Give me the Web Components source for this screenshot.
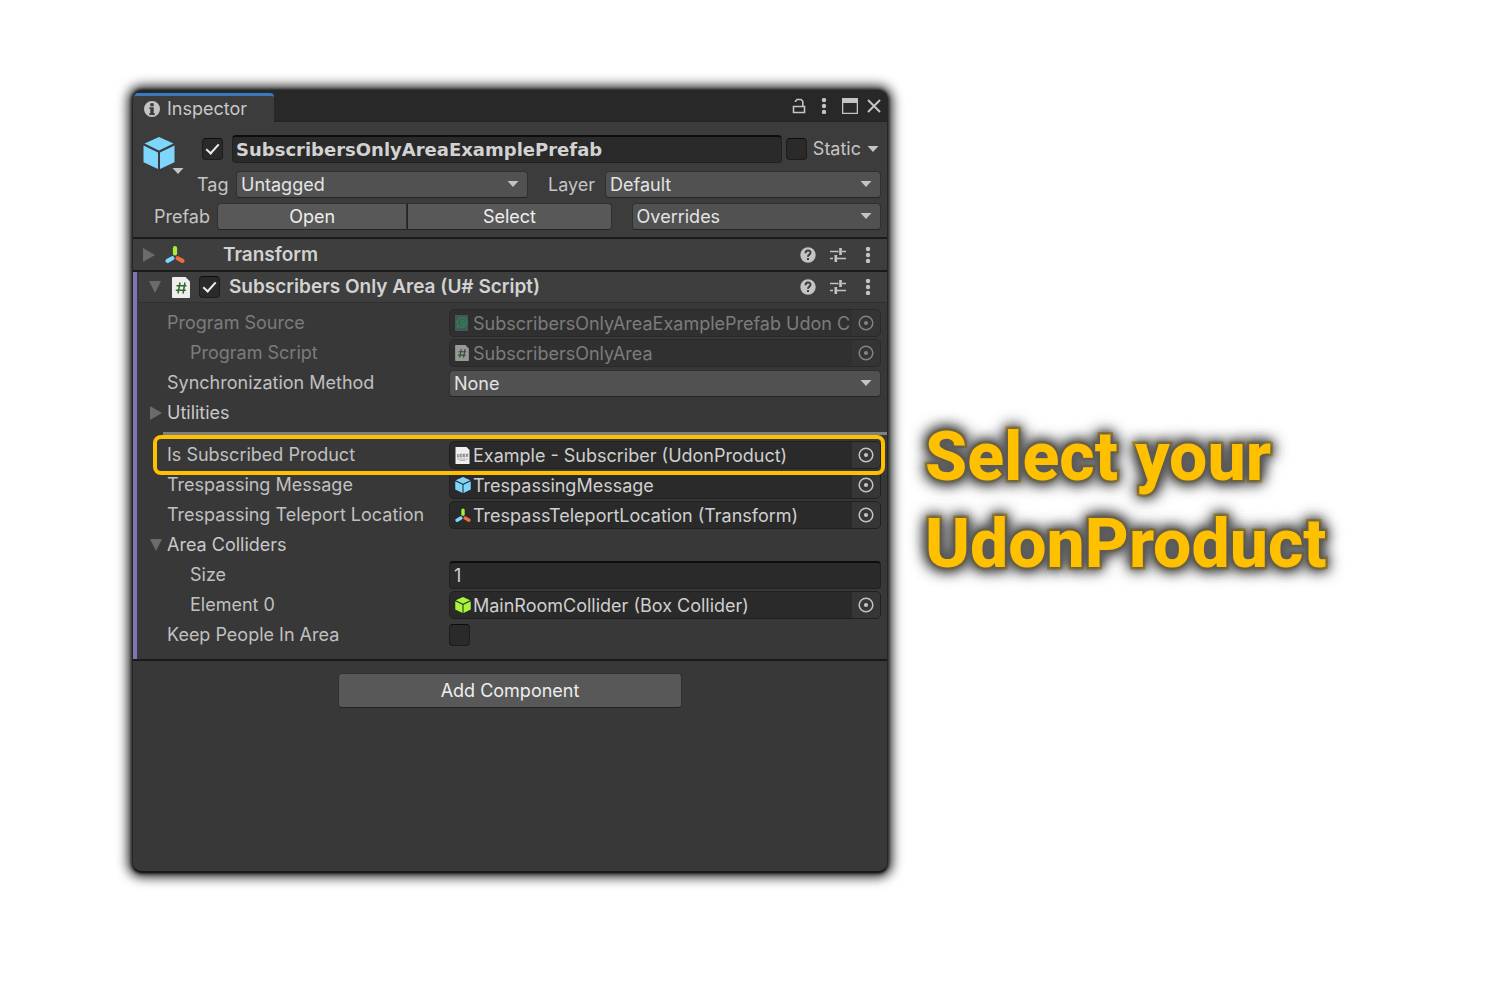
<!DOCTYPE html>
<html lang="en">
<head>
<meta charset="utf-8">
<title>Inspector</title>
<style>
  html, body { margin: 0; background: #fff; }
  body { font: 18px/26px Inter, "Liberation Sans", sans-serif; color: #c4c4c4; }
</style>
</head>
<body>
<guide-page>
  <inspector-window>
    <tab-bar slot="tabs">Inspector</tab-bar>
    <object-header></object-header>
    <component-section heading="Transform" icon="axes"></component-section>
    <component-section heading="Subscribers Only Area (U# Script)" icon="script" toggle open>
      <property-row label="Program Source" kind="object" icon="udon" value="SubscribersOnlyAreaExamplePrefab Udon C" disabled></property-row>
      <property-row label="Program Script" kind="object" icon="script" value="SubscribersOnlyArea" disabled indent></property-row>
      <property-row label="Synchronization Method" kind="select" value="None"></property-row>
      <property-row label="Utilities" kind="fold"></property-row>
      <section-rule></section-rule>
      <property-row label="Is Subscribed Product" kind="object" icon="product" value="Example - Subscriber (UdonProduct)" highlight></property-row>
      <property-row label="Trespassing Message" kind="object" icon="cube" value="TrespassingMessage"></property-row>
      <property-row label="Trespassing Teleport Location" kind="object" icon="axes" value="TrespassTeleportLocation (Transform)"></property-row>
      <property-row label="Area Colliders" kind="fold" open></property-row>
      <property-row label="Size" kind="text" value="1" indent></property-row>
      <property-row label="Element 0" kind="object" icon="cube-green" value="MainRoomCollider (Box Collider)" indent></property-row>
      <property-row label="Keep People In Area" kind="check"></property-row>
    </component-section>
    <add-component>Add Component</add-component>
  </inspector-window>
  <guide-callout slot="note"><span>Select your</span><span>UdonProduct</span></guide-callout>
</guide-page>

<script>
const cube = c => `<g fill="${c}"><path d="M16 0 30.5 6.6 16 13.4 1.5 6.6Z"/><path d="M.5 8.6 15 15.4V32L.5 25.2Z"/><path d="M31.500 8.600 17 15.400V32L31.500 25.200Z"/></g>`;
const ICONS = {
  info: ['0 0 16 16', '<path fill="#c4c4c4" fill-rule="evenodd" d="M8 0a8 8 0 1 0 0 16A8 8 0 0 0 8 0ZM6.300 2.200h3.400v3H6.300ZM5.300 6.300h4.400v6h1.100v1.600H5.300v-1.600h1V7.800h-1Z"/>'],
  lock: ['0 0 14 16', '<g fill="none" stroke="#c4c4c4" stroke-width="1.600"><path d="M1.500 8.500h11v6h-11z"/><path d="M3.500 4V3.200L5 1.500h4l1.800 1.800v5.200"/></g>'],
  dots: ['0 0 6 16', '<g fill="#c4c4c4"><circle cx="3" cy="2" r="2.200"/><circle cx="3" cy="8" r="2.200"/><circle cx="3" cy="14" r="2.200"/></g>'],
  maximize: ['0 0 16 16', '<path fill="#c4c4c4" fill-rule="evenodd" d="M0 0h16v16H0ZM1.300 5h13.400v9.700H1.300Z"/>'],
  close: ['0 0 14 14', '<path d="M1 1l12 12M13 1 1 13" stroke="#c4c4c4" stroke-width="2" fill="none"/>'],
  help: ['0 0 16 16', '<circle cx="8" cy="8" r="7.700" fill="#c4c4c4"/><path d="M5.500 6.200C5.500 2.500 10.600 2.600 10.500 5.800 10.400 7.700 8 7.600 8 9.800" fill="none" stroke="#3e3e3e" stroke-width="2"/><path d="M7 11h2v2H7z" fill="#3e3e3e"/>'],
  sliders: ['0 0 16 16', '<path d="M0 4.500h8.500M12 4.500h4M0 11.500h3M7 11.500h9" stroke="#c4c4c4" stroke-width="1.400"/><path d="M10.500 1v7M5.800 8v7" stroke="#c4c4c4" stroke-width="2.600"/>'],
  cube: ['0 0 32 32', cube('#7ed6fd')],
  'cube-green': ['0 0 32 32', cube('#a8f53c')],
  axes: ['0 0 20 18', '<g stroke-width="4.200" stroke-linecap="round"><path d="M10 2.200v5.300" stroke="#a6ee3d"/><path d="M7.300 12.200 2.600 14.900" stroke="#7ed6fd"/><path d="M12.700 12.200l4.700 2.700" stroke="#f26a3d"/></g>'],
  script: ['0 0 18 21', '<path fill="#eee" d="M0 1Q0 0 1 0H13.500L18 4.500V20Q18 21 17 21H1Q0 21 0 20Z"/><path fill="none" stroke="#2b6a30" stroke-width="1.500" d="M8 5.500 6 16.500M13 5.500 11 16.500M4.500 8.800h10M3.800 13.200h10"/>'],
  udon: ['0 0 13 16', '<path fill="#61717c" d="M0 0h13v16H0z"/><g fill="none" stroke="#27c36b" stroke-width="1.600"><circle cx="7" cy="7.500" r="4.800"/><path d="M9.500 6.500C8 4 5 6 6 8.500S10 10 9.500 8H7.500M1 13 4 10.500"/></g>'],
  product: ['0 0 14 17', '<path fill="#f0f0f0" d="M0 0h11l3 3v14H0z"/><path d="M2 7v3h1.500V7M5 7h1.500v3H5zM8 7h1.300v3H8zM11 10V7h1.200v3" fill="none" stroke="#777" stroke-width=".8"/><path d="M1.500 12h11M4 13.500h6" stroke="#999" stroke-width=".7"/>'],
  target: ['0 0 16 16', '<circle cx="8" cy="8" r="6.800" fill="none" stroke="#c4c4c4" stroke-width="1.500"/><circle cx="8" cy="8" r="2.100" fill="#c4c4c4"/>'],
  caret: ['0 0 12 6', '<path fill="#c4c4c4" d="M.5 0h11L6 6Z"/>'],
  'fold-closed': ['0 0 12 14', '<path fill="#6b6b6b" d="M0 0v14L12 7Z"/>'],
  'fold-open': ['0 0 12 12', '<path fill="#6b6b6b" d="M0 0h12L6 12Z"/>']
};

const BASE = `
  :host, *, ::before, ::after { box-sizing: border-box; }
  button, input, select { font: inherit; color: inherit; margin: 0; min-width: 0; }
  button { padding: 0; border: 0; background: none; display: flex; align-items: center; justify-content: center; }
  .btn { background: #585858; border: 1px solid #303030; border-bottom-color: #232323; border-radius: 4px; color: #eee; height: 27px; }
  .select { position: relative; display: flex; height: 27px; min-width: 0; }
  .select select { appearance: none; flex: 1; height: 27px; padding: 0 28px 0 4px; background: #515151; border: 1px solid #303030; border-bottom-color: #242424; border-radius: 4px; color: #e4e4e4; }
  .select unity-icon { position: absolute; right: 9px; top: 10px; pointer-events: none; }
  .text { display: block; width: 100%; height: 28px; padding: 0 4px; background: #2a2a2a; border: 1px solid #212121; border-top: 2px solid #0d0d0d; border-radius: 4px; color: #d2d2d2; }
  input[type=checkbox] { appearance: none; flex: none; display: block; width: 21px; height: 22px; background: #2a2a2a; border: 1px solid #1c1c1c; border-top-color: #0d0d0d; border-radius: 4px; }
  input[type=checkbox]:checked::before { content: ""; display: block; width: 13px; height: 7px; margin: 5px 0 0 3px; border: solid #eee; border-width: 0 0 2px 2px; transform: rotate(-48deg); }
`;

function define(name, render, css) {
  customElements.define(name, class extends HTMLElement {
    constructor() { super(); this.attachShadow({ mode: 'open' }); }
    connectedCallback() {
      this.shadowRoot.innerHTML = `<style>${BASE}${css}</style>${render(this)}`;
    }
  });
}
const icon = (name, w, h) => `<unity-icon name="${name}" style="width:${w}px;height:${h}px"></unity-icon>`;
const select = (id, value) => `<span class="select"><select id="${id}"><option>${value}</option></select>${icon('caret', 12, 6)}</span>`;

define('unity-icon', el => {
  const [box, body] = ICONS[el.getAttribute('name')];
  return `<svg viewBox="${box}" aria-hidden="true">${body}</svg>`;
}, `:host { display: block; flex: none; } svg { display: block; width: 100%; height: 100%; }`);

define('guide-page', () => `<slot></slot><slot name="note"></slot>`, `
  :host { display: grid; grid-template-columns: 756fr 575fr; column-gap: 37px; align-items: stretch; min-height: 100vh; padding: 90px 0 127px 132px; }
  ::slotted(inspector-window) { min-width: 0; }
`);

define('inspector-window', () => `<slot name="tabs"></slot><slot></slot>`, `
  :host { display: flex; flex-direction: column; overflow: hidden; background: #383838; border: 1px solid #262626; border-bottom: 2px solid #191919; border-radius: 10px; box-shadow: 0 0 12px 4px #222, 0 0 3px 1px #444; }
`);

define('tab-bar', () => `
  <div class="tab">${icon('info', 16, 16)}<slot></slot></div>
  <div class="tools">
    <button aria-label="Lock">${icon('lock', 14, 16)}</button>
    <button aria-label="More">${icon('dots', 6, 16)}</button>
    <button aria-label="Maximize">${icon('maximize', 16, 16)}</button>
    <button aria-label="Close">${icon('close', 14, 14)}</button>
  </div>`, `
  :host { display: flex; justify-content: space-between; height: 31px; padding-top: 2px; background: #282828; box-shadow: inset 0 -1px #232323; }
  .tab { display: flex; align-items: center; gap: 7px; width: 141px; padding: 0 11px; background: #3c3c3c; border-top: 3px solid #3a79bb; border-radius: 4px 4px 0 0; color: #c8c8c8; }
  .tools { display: flex; align-items: center; padding: 0 6px 4px 0; }
  .tools button { height: 16px; }
  .tools button + button { margin-left: 15px; }
  .tools button:last-child { margin-left: 9px; }
`);

define('object-header', () => `
  <div class="top">
    <button class="pick" aria-label="Object icon">${icon('cube', 32, 32)}${icon('caret', 12, 6)}</button>
    <div class="lines">
      <div class="line name">
        <input type="checkbox" checked aria-label="Active">
        <input class="text" id="name" aria-label="Name" value="SubscribersOnlyAreaExamplePrefab">
        <input type="checkbox" id="static"><label for="static">Static</label>
        <button class="drop" aria-label="Static flags">${icon('caret', 12, 6)}</button>
      </div>
      <div class="line tags">
        <label for="tag">Tag</label>${select('tag', 'Untagged')}
        <label for="layer" class="layer">Layer</label>${select('layer', 'Default')}
      </div>
    </div>
  </div>
  <div class="line prefab">
    <label for="over">Prefab</label>
    <div class="pair"><button class="btn">Open</button><button class="btn">Select</button></div>
    ${select('over', 'Overrides')}
  </div>`, `
  :host { display: flex; flex-direction: column; gap: 5px; padding: 13px 6px 7px 10px; background: #3c3c3c; border-bottom: 2px solid #1a1a1a; }
  .top { display: flex; gap: 13px; }
  .pick { flex: none; align-self: flex-start; display: flex; flex-direction: column; align-items: flex-start; width: 41px; padding-top: 2px; }
  .pick unity-icon:last-child { margin: -1px 0 0 29px; }
  .lines { flex: 1; min-width: 0; display: flex; flex-direction: column; gap: 8px; }
  .line { display: grid; align-items: center; }
  .name { grid-template-columns: 21px 1fr 21px auto auto; column-gap: 4px; padding-left: 5px; }
  .name .text { width: auto; margin-left: 5px; padding: 0 3px; font: bold 18px/24px "DejaVu Sans", sans-serif; }
  .name label { margin-left: 2px; }
  .drop { padding: 0 2px; height: 20px; }
  .tags { grid-template-columns: 39px 291fr auto 275fr; }
  .layer { padding: 0 10px 0 20px; }
  .prefab { grid-template-columns: auto 381fr 249fr; column-gap: 20px; padding-left: 11px; }
  .pair { display: grid; grid-template-columns: 190fr 204fr; margin-left: -13px; }
  .pair .btn:first-child { border-radius: 4px 0 0 4px; }
  .pair .btn:last-child { border-radius: 0 4px 4px 0; border-left-color: #232323; }
`);

define('component-section', el => `
  <div class="bar">
    <button aria-label="Fold" class="fold">${el.hasAttribute('open') ? icon('fold-open', 12, 12) : icon('fold-closed', 12, 14)}</button>
    <span class="kind">${el.getAttribute('icon') === 'axes' ? icon('axes', 20, 18) : icon('script', 18, 21)}</span>
    <span class="on">${el.hasAttribute('toggle') ? '<input type="checkbox" checked aria-label="Enabled">' : ''}</span>
    <h2>${el.getAttribute('heading')}</h2>
    <button aria-label="Help">${icon('help', 16, 16)}</button>
    <button aria-label="Presets">${icon('sliders', 16, 16)}</button>
    <button aria-label="Options">${icon('dots', 6, 16)}</button>
  </div>
  <div class="body"><slot></slot></div>`, `
  :host { display: block; }
  :host([open]) { border-left: 4px solid #8075b5; }
  .bar { display: flex; align-items: center; height: 31px; padding: 0 16px 0 10px; background: #3e3e3e; }
  :host([open]) .bar { margin-left: 2px; border-bottom: 1px solid #303030; }
  .fold { width: 12px; }
  .kind { width: 20px; margin-left: 10px; display: flex; justify-content: center; }
  .on { width: 21px; margin-left: 8px; }
  h2 { flex: 1; margin: 0 0 0 9px; font: 600 19px/26px Inter, sans-serif; color: #d2d2d2; }
  .bar > button:nth-last-child(-n+2) { margin-left: 14px; }
  .bar > button:last-child { margin-left: 19px; }
  .body { display: none; }
  :host([open]) .body { display: flex; flex-direction: column; gap: 2px; padding: 6px 6px 10px 13px; }
  :host(:not([open])) .bar { border-bottom: 2px solid #1a1a1a; height: 33px; }
`);

const SIZES = { script: [14, 16], udon: [13, 16], product: [15, 17], cube: [16, 16], 'cube-green': [16, 16], axes: [16, 15] };
define('property-row', el => {
  const kind = el.getAttribute('kind'), value = el.getAttribute('value') || '';
  const off = el.hasAttribute('disabled') ? 'disabled' : '', label = el.getAttribute('label');
  if (kind === 'fold') {
    const open = el.hasAttribute('open');
    return `<button class="fold" aria-expanded="${open}"><i>${open ? icon('fold-open', 12, 12) : icon('fold-closed', 12, 14)}</i>${label}</button>`;
  }
  const name = el.getAttribute('icon');
  const control = {
    object: () => `<span class="object"><i>${icon(name, ...SIZES[name])}</i><input id="f" readonly ${off} value="${value}"><button ${off} aria-label="Select object">${icon('target', 16, 16)}</button></span>`,
    select: () => select('f', value),
    text: () => `<input class="text" id="f" value="${value}">`,
    check: () => `<input type="checkbox" id="f">`
  }[kind]();
  return `<label for="f">${label}</label>${control}`;
}, `
  :host { position: relative; display: grid; grid-template-columns: 299fr 432fr; align-items: center; height: 28px; }
  label { padding-left: 17px; color: #c0c0c0; white-space: nowrap; }
  :host([indent]) label { padding-left: 40px; }
  :host([disabled]) { color: #7c7c7c; }
  :host([disabled]) label { color: #7c7c7c; }
  :host([disabled]) .object { background: #303030; border-color: #292929; }
  :host([disabled]) unity-icon { opacity: .55; }
  :host([disabled]) .object button { background: #343434; }
  .fold { grid-column: 1 / -1; justify-content: flex-start; height: 28px; color: #c8c8c8; }
  .fold i { width: 17px; }
  .object { display: flex; align-items: center; height: 28px; background: #2a2a2a; border: 1px solid #202020; border-radius: 5px; overflow: hidden; }
  .object i { flex: none; width: 23px; padding-left: 5px; display: flex; }
  .object input { flex: 1; height: 26px; border: 0; padding: 1px 0 0; background: none; color: #cfcfcf; }
  :host([disabled]) .object input { color: #7c7c7c; }
  .object button { flex: none; width: 28px; height: 26px; background: #363636; }
  :host([highlight])::after { content: ""; position: absolute; inset: -6px -4px -6px 3px; border: 4px solid #ffc000; border-radius: 8px; pointer-events: none; z-index: 1; }
`);

define('section-rule', () => '', `:host { display: block; height: 3px; margin: 3px -6px 4px 13px; background: #808080; }`);

define('add-component', () => `<button class="btn"><slot></slot></button>`, `
  :host { display: flex; justify-content: center; padding: 12px 0; border-top: 2px solid #1a1a1a; }
  .btn { width: 344px; height: 35px; }
`);

define('guide-callout', () => `<slot></slot>`, `
  :host { display: flex; flex-direction: column; align-self: center; margin-top: 38px; color: #ffc000; font: 800 68px/87px Roboto, sans-serif; -webkit-text-stroke: 5px #ffc000; stroke-linejoin: round; paint-order: stroke fill; text-shadow: 0 0 4px #5c5c5c, 0 0 8px #5c5c5c, 0 0 14px #555, 0 0 14px #555, 0 0 18px #555, 0 0 18px #555; white-space: nowrap; }
`);
</script>
</body>
</html>
